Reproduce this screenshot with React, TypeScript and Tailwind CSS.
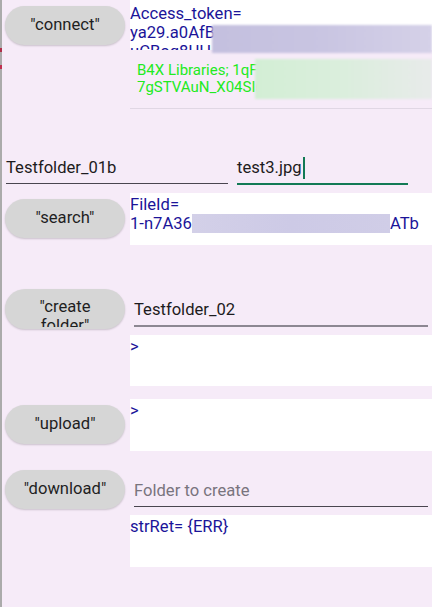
const Pill = ({ label }: { label: string }) => (
  <div className="ml-[3px] flex h-[39px] w-[120px] items-center justify-center rounded-full bg-[#d6d6d6] text-[16.6px] text-[#1f1f1f] shadow-[0_1px_2px_rgba(0,0,0,0.18)]">
    &quot;{label}&quot;
  </div>
);

const App = () => {
  return (
    <div className="flex h-[607px] w-[432px] overflow-hidden bg-[#f6ebf8] font-[Roboto,sans-serif]">
      {/* left edge strip */}
      <div className="flex w-[2px] shrink-0 flex-col bg-[#ababab]">
        <div className="mt-[48px] h-[4px] w-[2px] bg-[#b0304a]" />
        <div className="mt-[13px] h-[4px] w-[2px] bg-[#c03050]" />
      </div>

      <div className="flex w-[430px] flex-col">
        {/* connect */}
        <div className="flex h-[109px]">
          <div className="w-[128px] shrink-0 pt-[6px]">
            <Pill label="connect" />
          </div>
          <div className="relative w-[302px]">
            <div className="h-[50px] overflow-hidden bg-white pt-[4px] text-[16.6px] leading-[19px] text-[#1b1499]">
              <div>Access_token=</div>
              <div>ya29.a0AfB</div>
              <div>uCBog8UH</div>
            </div>
            <div className="mt-[3px] h-[56px] border-b border-[#e0d7e4] pl-[7px] pt-[9px] text-[15px] leading-[17px] text-[#22ea22]">
              <div>B4X Libraries; 1qF</div>
              <div>7gSTVAuN_X04SI(</div>
            </div>
            <div className="absolute left-[82px] top-[25px] h-[28px] w-[220px] bg-gradient-to-r from-[#c4c0df] via-[#c9c5e2] to-[#d5d1e8] blur-[1px]" />
            <div className="absolute left-[125px] top-[59px] h-[40px] w-[177px] bg-gradient-to-r from-[#d3eed5] via-[#dbeedd] to-[#e8ebea] blur-[1px]" />
          </div>
        </div>

        {/* folder / file inputs */}
        <div className="mt-[44px] flex text-[16.6px] text-[#1d1b20]">
          <div className="ml-[4px] flex h-[31px] w-[222px] items-center border-b border-[#49454f]">
            Testfolder_01b
          </div>
          <div className="ml-[9px] flex h-[32px] w-[171px] items-center border-b-2 border-[#127a55]">
            test3.jpg
            <span className="ml-[1px] h-[22px] w-[2px] bg-[#127a55]" />
          </div>
        </div>

        {/* search */}
        <div className="mt-[8px] flex">
          <div className="w-[128px] shrink-0 pt-[6px]">
            <Pill label="search" />
          </div>
          <div className="h-[52px] w-[302px] overflow-hidden bg-white pt-[2px] text-[16.6px] leading-[19px] text-[#1b1499]">
            <div>FileId=</div>
            <div className="flex items-center">
              <span>1-n7A36</span>
              <span className="h-[19px] w-[198px] bg-gradient-to-r from-[#d3d0e8] via-[#cdcae6] to-[#d0cde7] blur-[0.5px]" />
              <span>ATb</span>
            </div>
          </div>
        </div>

        {/* create folder */}
        <div className="mt-[44px] flex">
          <div className="w-[128px] shrink-0">
            <div className="ml-[3px] h-[40px] w-[120px] rounded-full bg-[#d6d6d6] text-[16.6px] text-[#1f1f1f] shadow-[0_1px_2px_rgba(0,0,0,0.18)]">
              <div className="h-[38px] overflow-hidden pt-[8px] text-center leading-[19px]">
                &quot;create
                <br />
                folder&quot;
              </div>
            </div>
          </div>
          <div className="w-[302px]">
            <div className="ml-[4px] mt-[7px] flex h-[31px] w-[294px] items-center border-b-2 border-[#8c8792] text-[16.6px] text-[#1d1b20]">
              Testfolder_02
            </div>
            <div className="mt-[8px] h-[51px] bg-white pt-[2px] text-[16.6px] leading-[19px] text-[#1b1499]">
              &gt;
            </div>
          </div>
        </div>

        {/* upload */}
        <div className="mt-[13px] flex">
          <div className="w-[128px] shrink-0 pt-[6px]">
            <Pill label="upload" />
          </div>
          <div className="h-[52px] w-[302px] bg-white pt-[2px] text-[16.6px] leading-[19px] text-[#1b1499]">
            &gt;
          </div>
        </div>

        {/* download */}
        <div className="mt-[19px] flex">
          <div className="w-[128px] shrink-0">
            <Pill label="download" />
          </div>
          <div className="w-[302px]">
            <div className="ml-[4px] mt-[7px] flex h-[30px] w-[294px] items-center border-b border-[#49454f] text-[16.6px] text-[#79747e]">
              Folder to create
            </div>
            <div className="mt-[8px] h-[52px] bg-white pt-[2px] text-[16.6px] leading-[19px] text-[#1b1499]">
              strRet= {"{ERR}"}
            </div>
          </div>
        </div>
      </div>
    </div>
  );
};

export default App;
